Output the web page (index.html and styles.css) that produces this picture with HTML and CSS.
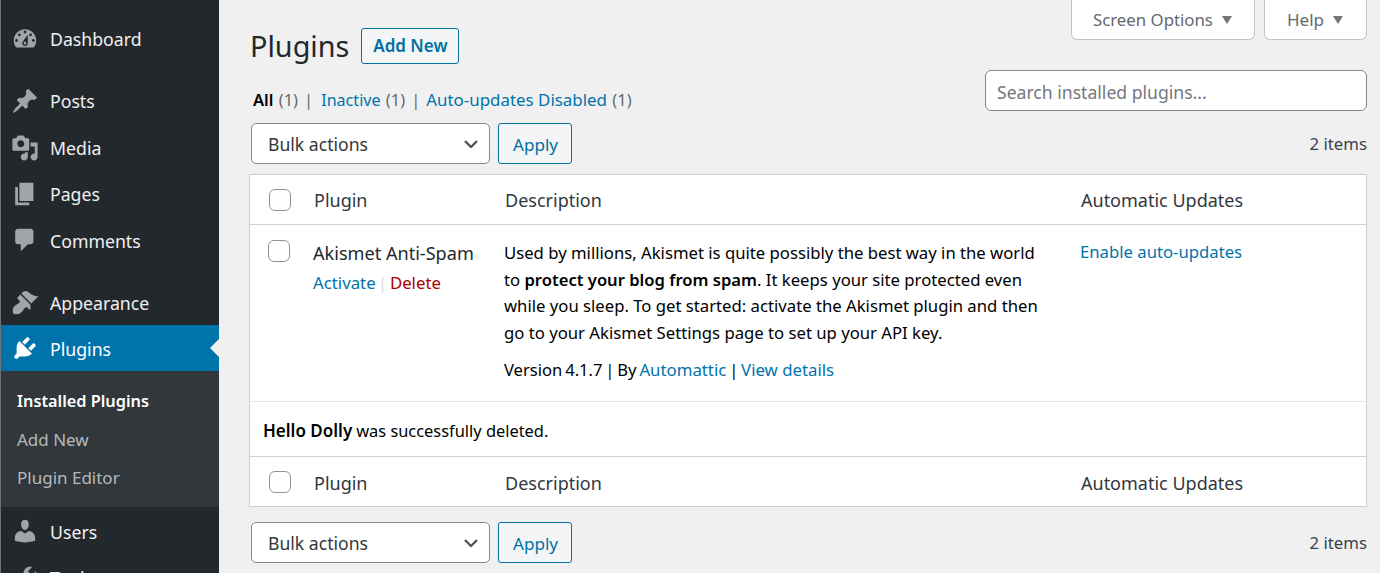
FILE: index.html
```html
<!DOCTYPE html>
<html lang="en">
<head>
<meta charset="utf-8">
<title>Plugins</title>
<link rel="stylesheet" href="styles.css">
</head>
<body>
<div class="app">
<nav class="side">
  <ul class="menu first">
    <li class="item"><svg class="ico" viewBox="0 0 20 20"><path d="M3.76 16h12.48c1.1-1.37 1.76-3.11 1.76-5 0-4.42-3.58-8-8-8s-8 3.58-8 8c0 1.89.66 3.63 1.76 5zM10 4c.55 0 1 .45 1 1s-.45 1-1 1-1-.45-1-1 .45-1 1-1zM6 6c.55 0 1 .45 1 1s-.45 1-1 1-1-.45-1-1 .45-1 1-1zm8 0c.55 0 1 .45 1 1s-.45 1-1 1-1-.45-1-1 .45-1 1-1zm-5.37 5.55L12 7v6c0 1.1-.9 2-2 2s-2-.9-2-2c0-.57.24-1.08.63-1.45zM4 10c.55 0 1 .45 1 1s-.45 1-1 1-1-.45-1-1 .45-1 1-1zm12 0c.55 0 1 .45 1 1s-.45 1-1 1-1-.45-1-1 .45-1 1-1zm-5 3c0-.55-.45-1-1-1s-1 .45-1 1 .45 1 1 1 1-.45 1-1z"/></svg><span>Dashboard</span></li>
  </ul>
  <ul class="menu">
    <li class="item"><svg class="ico" viewBox="0 0 20 20"><path d="M10.44 3.02l1.82-1.82 6.36 6.35-1.83 1.82c-1.05-.68-2.48-.57-3.41.36l-.75.75c-.92.93-1.04 2.35-.35 3.41l-1.83 1.82-2.41-2.41-2.8 2.79c-.42.42-3.38 2.71-3.8 2.29s1.86-3.39 2.28-3.81l2.79-2.79L4.1 9.36l1.83-1.82c1.05.69 2.48.57 3.4-.36l.75-.75c.93-.92 1.05-2.35.36-3.41z"/></svg><span>Posts</span></li>
    <li class="item"><svg class="ico" viewBox="0 0 20 20"><path d="M13 11V4c0-.55-.45-1-1-1h-1.67L9 1H5L3.67 3H2c-.55 0-1 .45-1 1v7c0 .55.45 1 1 1h10c.55 0 1-.45 1-1zM7 4.5c1.38 0 2.5 1.12 2.5 2.5S8.38 9.5 7 9.5 4.5 8.38 4.5 7 5.62 4.5 7 4.5zM14 6h5v10.5c0 1.38-1.12 2.5-2.5 2.5S14 17.88 14 16.5s1.12-2.5 2.5-2.5c.17 0 .34.02.5.05V9h-3V6zm-4 8.05V13h2v3.5c0 1.38-1.12 2.5-2.5 2.5S7 17.88 7 16.5 8.12 14 9.5 14c.17 0 .34.02.5.05z"/></svg><span>Media</span></li>
    <li class="item"><svg class="ico" viewBox="0 0 20 20"><path d="M6 15V2h10v13H6zm-1 1h8v2H3V5h2v11z"/></svg><span>Pages</span></li>
    <li class="item low"><svg class="ico" viewBox="0 0 20 20"><path d="M5 2h9c1.1 0 2 .9 2 2v7c0 1.1-.9 2-2 2h-2l-5 5v-5H5c-1.1 0-2-.9-2-2V4c0-1.1.9-2 2-2z"/></svg><span>Comments</span></li>
  </ul>
  <ul class="menu">
    <li class="item appearance low"><svg class="ico" viewBox="0 0 20 20"><path d="M14.48 11.06L7.41 3.99l1.5-1.5c.5-.56 2.3-.47 3.51.32 1.21.8 1.43 1.28 2.91 2.1 1.18.64 2.45 1.26 4.45.85zm-.71.71L6.7 4.7 4.93 6.47c-.39.39-.39 1.02 0 1.41l1.06 1.06c.39.39.39 1.03 0 1.42-.6.6-1.43 1.11-2.21 1.69-.35.26-.7.53-1.01.84C1.43 13.71.96 15.12 1.37 17.48c.1.6.5 1 1.1 1.12 2.36.41 3.77-.06 5.14-1.42.31-.31.58-.66.84-1.01.58-.78 1.09-1.61 1.69-2.21.39-.39 1.03-.39 1.42 0l1.06 1.06c.39.39 1.02.39 1.41 0z"/></svg><span>Appearance</span></li>
    <li class="item current low"><svg class="ico" viewBox="0 0 20 20"><path d="M13.11 4.36L9.87 7.6 8 5.73l3.24-3.24c.35-.34 1.05-.2 1.56.32.52.51.66 1.21.31 1.55zm-8 1.77l.91-1.12 9.01 9.01-1.19.84c-.71.71-2.63 1.16-3.82 1.16H6.14L4.9 17.26c-.59.59-1.54.59-2.12 0-.59-.58-.59-1.53 0-2.12l1.24-1.24v-3.88c0-1.13.4-3.19 1.09-3.89zm7.26 3.97l3.24-3.24c.34-.35 1.04-.21 1.55.31.52.51.66 1.21.31 1.55l-3.24 3.25z"/></svg><span>Plugins</span></li>
    <li class="sub">
      <a class="sub-link on">Installed Plugins</a>
      <a class="sub-link">Add New</a>
      <a class="sub-link">Plugin Editor</a>
    </li>
    <li class="item low"><svg class="ico" viewBox="0 0 20 20"><path d="M10 9.25c-2.27 0-2.73-3.44-2.73-3.44C7 4.02 7.82 2 9.97 2c2.16 0 2.98 2.02 2.71 3.81 0 0-.41 3.44-2.68 3.44zm0 2.57L12.72 10c2.39 0 4.52 2.33 4.52 4.53v2.49s-3.65 1.13-7.24 1.13c-3.65 0-7.24-1.13-7.24-1.13v-2.49c0-2.25 1.94-4.48 4.47-4.48z"/></svg><span>Users</span></li>
    <li class="item"><svg class="ico" viewBox="0 0 20 20"><path d="M16.68 9.77c-1.34 1.34-3.3 1.67-4.95.99l-5.41 6.52c-.99.99-2.59.99-3.58 0s-.99-2.59 0-3.57l6.52-5.42c-.68-1.65-.35-3.61.99-4.95 1.28-1.28 3.12-1.62 4.72-1.06l-2.89 2.89 2.82 2.82 2.86-2.87c.53 1.58.18 3.39-1.08 4.65zM3.81 16.21c.4.39 1.04.39 1.43 0 .4-.4.4-1.04 0-1.43-.39-.4-1.03-.4-1.43 0-.39.39-.39 1.03 0 1.43z"/></svg><span>Tools</span></li>
  </ul>
</nav>
<main class="main">
  <header class="head">
    <div class="head-left">
      <div class="title-row">
        <h1 class="title">Plugins</h1>
        <a class="btn add">Add New</a>
      </div>
      <p class="filters"><b class="f-on">All</b> <span class="count">(1)</span><span class="sep">|</span><a class="f-inactive">Inactive</a> <span class="count">(1)</span><span class="sep">|</span><a class="f-auto">Auto-updates Disabled</a> <span class="count">(1)</span></p>
    </div>
    <div class="head-right">
      <div class="tabs">
        <div class="tab">Screen Options<i class="caret"></i></div>
        <div class="tab help">Help<i class="caret"></i></div>
      </div>
      <div class="search">Search installed plugins...</div>
    </div>
  </header>
  <div class="nav">
    <div class="select">Bulk actions<svg class="chev" viewBox="0 0 14 8"><path d="M1 1l6 6 6-6"/></svg></div>
    <a class="btn apply">Apply</a>
    <span class="items">2 items</span>
  </div>
  <section class="table">
    <div class="row thead">
      <div class="cell"><i class="check"></i></div>
      <div class="cell">Plugin</div>
      <div class="cell">Description</div>
      <div class="cell">Automatic Updates</div>
    </div>
    <div class="row plugin">
      <div class="cell"><i class="check"></i></div>
      <div class="cell">
        <div class="name">Akismet Anti-Spam</div>
        <div class="acts"><a>Activate</a><span class="pipe">|</span><a class="del">Delete</a></div>
      </div>
      <div class="cell">
        <p class="desc">Used by millions, Akismet is quite possibly the best way in the world to <b>protect your blog from spam</b>. It keeps your site protected even while you sleep. To get started: activate the Akismet plugin and then go to your Akismet Settings page to set up your API key.</p>
        <p class="meta">Version 4.1.7 | By <a>Automattic</a> | <a>View details</a></p>
      </div>
      <div class="cell"><a class="auto-link">Enable auto-updates</a></div>
    </div>
    <div class="msg"><b>Hello Dolly</b><span>was successfully deleted.</span></div>
    <div class="row tfoot">
      <div class="cell"><i class="check"></i></div>
      <div class="cell">Plugin</div>
      <div class="cell">Description</div>
      <div class="cell">Automatic Updates</div>
    </div>
  </section>
  <div class="nav bottom">
    <div class="select">Bulk actions<svg class="chev" viewBox="0 0 14 8"><path d="M1 1l6 6 6-6"/></svg></div>
    <a class="btn apply">Apply</a>
    <span class="items">2 items</span>
  </div>
</main>
</div>
</body>
</html>
```
FILE: styles.css
```css
* { box-sizing: border-box; }
html, body { margin: 0; height: 573px; overflow: hidden; }
body { background: #f0f0f1; color: #3c434a; font: 17px/26px "Noto Sans", "Open Sans", sans-serif; }
a { color: #0073aa; }
ul { list-style: none; margin: 0; padding: 0; }
p { margin: 0; }
b { font-weight: 600; }
.app { display: flex; align-items: flex-start; height: 573px; }
.side { width: 219px; height: 573px; flex: none; background: #23282d; border-left: 1px solid #6d7175; overflow: hidden; }
.menu { margin-bottom: 15.6px; }
.menu.first { padding-top: 16px; }
.item { height: 46.4px; display: flex; align-items: center; gap: 11px; padding-left: 10px; color: #f0f0f1; position: relative; font-size: 17.7px; }
.low span { padding-top: 2px; }
.appearance { height: 46px; }
.ico { width: 28px; height: 28px; fill: #a0a5aa; flex: none; }
.current { background: #0073aa; color: #fff; height: 46px; }
.current .ico { fill: #fff; }
.current::after { content: ""; position: absolute; right: 0; top: 14px; border: 9px solid transparent; border-right-color: #f0f0f1; border-left-width: 0; }
.sub { background: #32373c; height: 136px; padding-top: 11px; margin-bottom: 1px; }
.sub-link { display: block; height: 38.4px; line-height: 38px; padding-left: 16px; color: #b4b9be; font-size: 17px; }
.sub-link.on { color: #fff; font-weight: 600; font-size: 16.3px; }
.main { flex: 1; min-width: 0; padding: 0 13px 0 30px; }
.head { display: flex; justify-content: space-between; height: 123px; }
.head-left { padding-top: 28px; padding-left: 1px; }
.title-row { display: flex; align-items: center; gap: 12px; height: 36px; }
.title { margin: 0; font-size: 28.8px; font-weight: 400; color: #23282d; line-height: 36px; }
.btn { display: flex; align-items: center; justify-content: center; border: 1px solid #0071a1; border-radius: 3px; background: #f3f5f6; color: #0071a1; }
.add { width: 98px; height: 36px; font-weight: 600; }
.filters { margin-top: 23px; padding-left: 3px; line-height: 26px; color: #646970; white-space: nowrap; font-size: 16.5px; }
.f-on { color: #000; font-weight: 600; }
.f-inactive { font-size: 16.1px; }
.f-auto { font-size: 16.9px; margin-left: -2px; }
.count { color: #646970; margin-left: 1px; }
.sep { margin: 0 8px 0 6px; color: #646970; }
.head-right { display: flex; flex-direction: column; align-items: flex-end; }
.tabs { display: flex; gap: 9px; height: 40px; }
.tab { width: 184px; height: 40px; padding: 0 0 0 21px; display: flex; align-items: center; background: #fff; border: 1px solid #c3c4c7; border-top: 0; border-radius: 0 0 6px 6px; color: #646970; font-size: 16.8px; }
.help { width: 103px; padding-left: 22px; font-size: 17px; }
.caret { margin-left: 9px; border: 5.5px solid transparent; border-top: 8px solid #72777c; border-bottom: 0; }
.search { width: 382px; height: 41px; margin-top: 30px; padding: 2px 0 0 11px; display: flex; align-items: center; background: #fff; border: 1px solid #7e8993; border-radius: 6px; color: #72777c; font-size: 17.6px; }
.nav { display: flex; align-items: center; height: 41px; padding-left: 2px; }
.select { width: 239px; height: 41px; padding: 0 11px 0 16px; display: flex; align-items: center; justify-content: space-between; background: #fff; border: 1px solid #7e8993; border-radius: 5px; color: #32373c; font-size: 17.6px; }
.chev { width: 14px; height: 8px; fill: none; stroke: #50575e; stroke-width: 2.4; }
.apply { width: 74px; height: 41px; margin-left: 8px; padding: 2px 0 0 1px; font-size: 17.1px; }
.items { margin-left: auto; font-size: 16.8px; }
.table { margin-top: 10px; background: #fff; border: 1px solid #ccd0d4; font-size: 18px; }
.row { display: grid; grid-template-columns: 64px 191px 576px 1fr; }
.thead { height: 50px; border-bottom: 1px solid #ccd0d4; align-items: center; color: #32373c; }
.tfoot { height: 50px; padding-top: 3px; border-top: 1px solid #ccd0d4; align-items: center; color: #32373c; }
.tfoot .check { margin-top: -2px; }
.check { display: block; width: 22px; height: 22px; margin-left: 19px; background: #fff; border: 1px solid #8c9299; border-radius: 6px; }
.plugin { height: 177px; border-bottom: 1px solid #e5e6e8; padding-top: 15px; }
.plugin .cell:not(:first-child) { margin-left: -1px; color: #32373c; }
.plugin .check { margin-left: 18px; }
.name { color: #23282d; font-size: 18.1px; }
.acts { margin-top: 4px; font-size: 16.8px; }
.pipe { margin: 0 2px 0 2px; color: #dcdcde; }
.del { color: #a00; margin-left: 1px; }
.desc { width: 540px; color: #000; font-size: 16.7px; line-height: 26.6px; }
.desc b { font-size: 16.6px; }
.meta { margin-top: 11px; color: #000; font-size: 16.6px; line-height: 26.6px; word-spacing: -1.5px; }
.meta a { font-size: 16.8px; word-spacing: 0; }
.auto-link { display: block; margin-top: -1px; font-size: 16.7px; }
.msg { height: 54px; padding: 3px 0 0 13px; display: flex; align-items: center; gap: 4px; color: #000; font-size: 16.4px; }
.msg b { font-size: 17px; }
.bottom { margin-top: 15px; }
```
